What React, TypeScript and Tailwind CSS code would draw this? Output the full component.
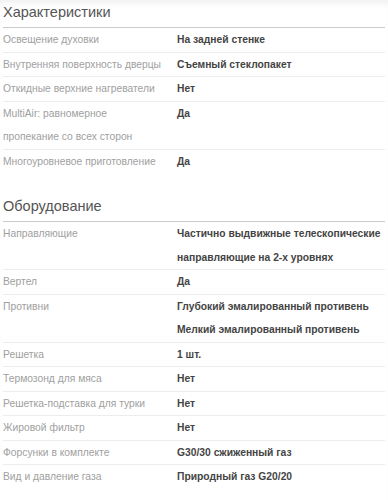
import React from 'react'

type Row = { label: string[]; value: string[] }

const features: Row[] = [
  { label: ['Освещение духовки'], value: ['На задней стенке'] },
  { label: ['Внутренняя поверхность дверцы'], value: ['Съемный стеклопакет'] },
  { label: ['Откидные верхние нагреватели'], value: ['Нет'] },
  { label: ['MultiAir: равномерное', 'пропекание со всех сторон'], value: ['Да'] },
  { label: ['Многоуровневое приготовление'], value: ['Да'] },
]

const equipment: Row[] = [
  {
    label: ['Направляющие'],
    value: ['Частично выдвижные телескопические', 'направляющие на 2-х уровнях'],
  },
  { label: ['Вертел'], value: ['Да'] },
  {
    label: ['Противни'],
    value: ['Глубокий эмалированный противень', 'Мелкий эмалированный противень'],
  },
  { label: ['Решетка'], value: ['1 шт.'] },
  { label: ['Термозонд для мяса'], value: ['Нет'] },
  { label: ['Решетка-подставка для турки'], value: ['Нет'] },
  { label: ['Жировой фильтр'], value: ['Нет'] },
  { label: ['Форсунки в комплекте'], value: ['G30/30 сжиженный газ'] },
  { label: ['Вид и давление газа'], value: ['Природный газ G20/20'] },
]

function Section({ title, rows }: { title: string; rows: Row[] }) {
  return (
    <section>
      <h2 className="border-b border-[#c9cccc] pb-[3px] text-[14.5px] leading-6 font-normal text-[#555]">
        {title}
      </h2>
      <div>
        {rows.map((row, i) => (
          <div
            key={row.label[0]}
            className={
              'grid grid-cols-[174px_1fr] text-[10.3px] leading-[23.5px] ' +
              (i < rows.length - 1 ? 'border-b border-[#ececec]' : '')
            }
          >
            <div className="whitespace-nowrap text-[#a0a0a0]">
              {row.label.map((l) => (
                <div key={l}>{l}</div>
              ))}
            </div>
            <div className="whitespace-nowrap font-bold text-[#444]">
              {row.value.map((v) => (
                <div key={v}>{v}</div>
              ))}
            </div>
          </div>
        ))}
      </div>
    </section>
  )
}

export default function App() {
  return (
    <div className="min-h-[500px] bg-white px-[3px] font-['Liberation_Sans',Arial,sans-serif] shadow-[inset_0_8px_8px_-6px_rgba(0,0,0,0.08)]">
      <Section title="Характеристики" rows={features} />
      <div className="h-[21px]" />
      <Section title="Оборудование" rows={equipment} />
    </div>
  )
}
